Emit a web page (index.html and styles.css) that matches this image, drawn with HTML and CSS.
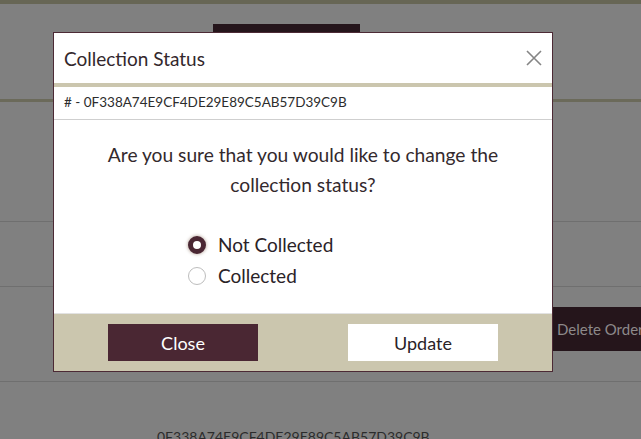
FILE: index.html
```html
<!DOCTYPE html>
<html>
<head>
<meta charset="utf-8">
<link rel="stylesheet" href="styles.css">
</head>
<body>
<div class="page">
  <div class="topbar"></div>
  <div class="tabs"><div class="tab-btn"></div></div>
  <div class="rule-olive"></div>
  <div class="section s1"></div>
  <div class="section s2"></div>
  <div class="actions"><div class="delete-btn">Delete Order</div></div>
  <div class="rule-gray"></div>
  <div class="bottom-hash">0F338A74E9CF4DE29E89C5AB57D39C9B</div>
</div>

<div class="modal">
  <div class="modal-header">
    <div class="modal-title">Collection Status</div>
    <svg class="close-x" width="16" height="16" viewBox="0 0 16 16"><path d="M1 1 L15 15 M15 1 L1 15" stroke="#858585" stroke-width="1.6" fill="none"/></svg>
  </div>
  <div class="band"></div>
  <div class="hash-row"># - 0F338A74E9CF4DE29E89C5AB57D39C9B</div>
  <div class="modal-body">
    <p class="question">Are you sure that you would like to change the<br>collection status?</p>
    <div class="radios">
      <label class="radio-row"><span class="radio checked"></span>Not Collected</label>
      <label class="radio-row"><span class="radio"></span>Collected</label>
    </div>
  </div>
  <div class="modal-footer">
    <div class="btn btn-close">Close</div>
    <div class="btn btn-update">Update</div>
  </div>
</div>
</body>
</html>
```
FILE: styles.css
```css
html, body {
  margin: 0;
  padding: 0;
  width: 641px;
  height: 439px;
  overflow: hidden;
  background: #808080;
  font-family: Lato, "Open Sans", sans-serif;
}
.page {
  position: relative;
  width: 641px;
  height: 439px;
  overflow: hidden;
}
.topbar {
  height: 4px;
  background: #676655;
}
.tabs {
  padding-top: 20px;
  height: 95px;
  box-sizing: border-box;
}
.tab-btn {
  margin-left: 213px;
  width: 147px;
  height: 40px;
  background: #25151b;
}
.rule-olive {
  height: 3px;
  background: #6b6a5a;
}
.section {
  border-bottom: 1px solid #6f6f6f;
}
.s1 { height: 119px; }
.s2 { height: 64px; }
.actions {
  display: flex;
  padding-top: 20px;
  height: 44px;
}
.delete-btn {
  margin-left: 553px;
  width: 88px;
  flex: none;
  overflow: hidden;
  white-space: nowrap;
  box-sizing: border-box;
  background: #25151b;
  color: #8d898a;
  font-size: 15px;
  line-height: 44px;
  padding-left: 4px;
}
.rule-gray {
  margin-top: 30px;
  border-top: 1px solid #6f6f6f;
}
.bottom-hash {
  margin-top: 47px;
  margin-left: 157px;
  font-size: 14px;
  color: #2c2c2c;
  line-height: 16px;
}

.modal {
  position: absolute;
  left: 53px;
  top: 32px;
  width: 500px;
  height: 340px;
  box-sizing: border-box;
  border: 1px solid #4c2a35;
  background: #fff;
  display: flex;
  flex-direction: column;
}
.modal-header {
  height: 50px;
  display: flex;
  align-items: center;
  justify-content: space-between;
  padding: 0 10px 0 10px;
}
.modal-title {
  font-size: 19px;
  color: #33272c;
}
.band {
  height: 4px;
  background: #cbc6ae;
}
.hash-row {
  height: 32px;
  border-bottom: 1px solid #cfcfcf;
  padding-left: 10px;
  font-size: 13.5px;
  color: #2c2c2c;
  line-height: 31px;
}
.modal-body {
  flex: 1;
  padding-top: 20px;
}
.question {
  margin: 0;
  text-align: center;
  font-size: 19.2px;
  line-height: 30px;
  color: #33292d;
}
.radios {
  margin-top: 29px;
  padding-left: 134px;
  display: flex;
  flex-direction: column;
}
.radio-row {
  display: flex;
  align-items: center;
  height: 31px;
  font-size: 19px;
  color: #2a2227;
}
.radio {
  width: 18px;
  height: 18px;
  box-sizing: border-box;
  border-radius: 50%;
  border: 1px solid #bdbdbd;
  background: #fff;
  margin-right: 12px;
}
.radio.checked {
  border: 5px solid #4a2733;
  background: #fff;
  box-shadow: 0 0 3px 1px rgba(120, 90, 70, 0.35);
}
.modal-footer {
  height: 58px;
  box-sizing: border-box;
  border-top: 1px solid #e2e2e2;
  background: #cbc6ae;
  display: flex;
  justify-content: space-between;
  align-items: center;
  padding: 0 54px;
}
.btn {
  width: 150px;
  height: 37px;
  display: flex;
  align-items: center;
  justify-content: center;
  font-size: 18px;
}
.btn-close {
  background: #4a2733;
  color: #fff;
}
.btn-update {
  background: #fff;
  color: #2a2227;
}
```
